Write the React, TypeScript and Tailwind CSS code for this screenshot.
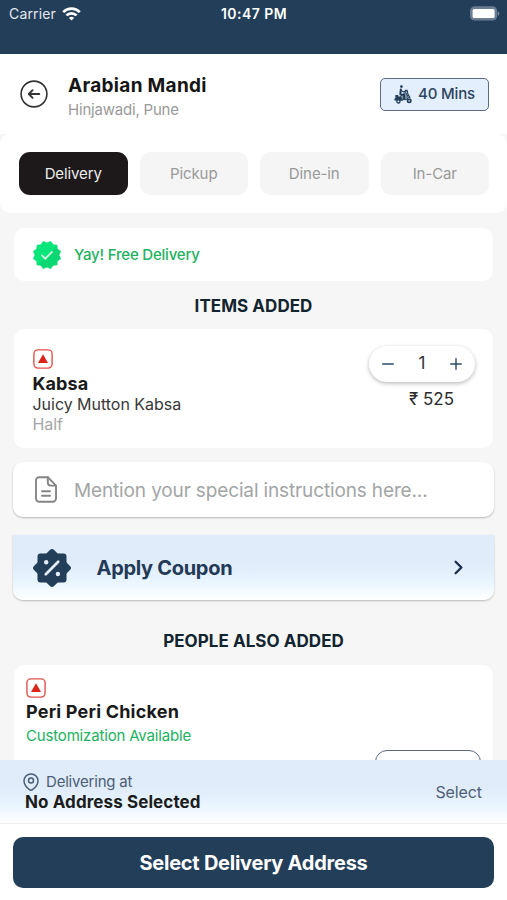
import React from 'react';
import { ChevronRight, Minus, Plus } from 'lucide-react';

const StatusBar: React.FC = () => (
  <div className="h-[54px] shrink-0 bg-[#233e59] px-[9px] text-white">
    <div className="relative flex h-[27px] items-center justify-between">
      <div className="flex items-center gap-[6px]">
        <span className="text-[14px] tracking-[0.15px] text-[#e3e8ee]">Carrier</span>
        <svg width="19" height="14" viewBox="0 0 19 14" fill="none" stroke="#fff" strokeWidth="2.7">
          <path d="M1.2 5.1a11.8 11.8 0 0 1 16.6 0" />
          <path d="M4.4 8.4a7.2 7.2 0 0 1 10.2 0" />
          <path d="M9.5 13.6 6.9 11a3.7 3.7 0 0 1 5.2 0z" fill="#fff" stroke="none" />
        </svg>
      </div>
      <span className="absolute inset-x-0 pl-px text-center text-[14px] font-semibold tracking-[0.45px]">10:47 PM</span>
      <svg width="31" height="15" viewBox="0 0 31 15" className="-mr-[2px]">
        <rect x="1.6" y="0.9" width="26" height="13" rx="4" fill="#6b7d91" stroke="#6b7d91" strokeWidth="1.2" />
        <rect x="3.6" y="2.9" width="22" height="9.2" rx="1.6" fill="#fff" />
        <path d="M28.8 5.2c2 .8 2 3.8 0 4.6z" fill="#7c8b9c" />
      </svg>
    </div>
  </div>
);

const ScooterIcon: React.FC = () => (
  <svg width="18" height="19" viewBox="0 0 18 19" fill="none" stroke="#233e59" strokeLinecap="round" strokeLinejoin="round">
    <circle cx="7.4" cy="1.6" r="1.4" fill="#233e59" stroke="none" />
    <path d="M6.8 4.6 6.3 9.4l3.7.4.2 4.2" strokeWidth="2" />
    <path d="M7 5.4l2.6 1.5 2.6-.8" strokeWidth="1.1" />
    <path d="M11.4 5.4h1.7l.8 3.6 2 3.6" strokeWidth="1.2" />
    <path d="M11.8 7.6l2.6 4.8-1.8 2.2H8.400l-2-2.600z" fill="#233e59" fillOpacity="0.55" strokeWidth="1" />
    <path d="M.4 15.400c0-3.400 2-4.300 5.800-3.800l3 4.100z" fill="#233e59" stroke="none" />
    <path d="M1.300 10h3v2h-3z" fill="#233e59" stroke="none" />
    <circle cx="4.4" cy="16.4" r="1.6" fill="#e3effc" strokeWidth="1.3" />
    <circle cx="15.2" cy="15.8" r="1.8" fill="#8fa0b3" strokeWidth="1.4" />
  </svg>
);

const BackIcon: React.FC = () => (
  <svg width="28" height="28" viewBox="0 0 28 28" fill="none" stroke="#343436" strokeLinecap="round" strokeLinejoin="round">
    <circle cx="14" cy="14" r="12.9" strokeWidth="1.6" />
    <path d="M19.3 14H9M12.6 10.2 8.8 14l3.8 3.8" strokeWidth="1.9" />
  </svg>
);

const Header: React.FC = () => (
  <header className="flex h-20 shrink-0 items-center bg-white pl-5 pr-[18px]">
    <BackIcon />
    <div className="ml-5 mt-[6px] flex-1">
      <h1 className="text-[19px] font-bold leading-6 tracking-[0.3px] text-[#161616]">Arabian Mandi</h1>
      <p className="text-[15px] leading-[23px] tracking-[-0.2px] text-[#9a9a9a]">Hinjawadi, Pune</p>
    </div>
    <div className="flex h-[33px] w-[109px] items-center justify-center gap-[6px] rounded-[5px] border-[1.5px] border-[#5b6b80] bg-[#e3effc]">
      <ScooterIcon />
      <span className="pt-px text-[15px] font-medium tracking-[-0.15px] text-[#2d4460]">40 Mins</span>
    </div>
  </header>
);

const tabs = ['Delivery', 'Pickup', 'Dine-in', 'In-Car'];

const OrderTabs: React.FC = () => (
  <div className="grid h-[79px] shrink-0 grid-cols-4 gap-3 rounded-[10px] bg-white pl-[19px] pr-[18px] pt-[18px]">
    {tabs.map((tab, i) => (
      <div
        key={tab}
        className={`flex h-[43px] items-center justify-center rounded-[11px] pt-px text-[15px] tracking-[-0.1px] ${
          i === 0 ? 'bg-[#1d191b] text-[#ececec]' : 'bg-[#f5f5f5] text-[#999]'
        }`}
      >
        {tab}
      </div>
    ))}
  </div>
);

const VerifiedSeal: React.FC = () => {
  const points = Array.from({ length: 24 }, (_, i) => {
    const r = i % 2 === 0 ? 13.6 : 11.5;
    const a = (i * Math.PI) / 12 + Math.PI / 12;
    return `${15 + r * Math.sin(a)},${15 - r * Math.cos(a)}`;
  }).join(' ');
  return (
    <svg width="30" height="30" viewBox="0 0 30 30">
      <defs>
        <linearGradient id="seal" x1="0" y1="0" x2="1" y2="1">
          <stop offset="0.5" stopColor="#08e57b" />
          <stop offset="0.51" stopColor="#0bd873" />
        </linearGradient>
      </defs>
      <polygon points={points} fill="url(#seal)" stroke="url(#seal)" strokeWidth="1.5" strokeLinejoin="round" />
      <path d="M10 15.4l3.3 3.3 6.7-6.9" fill="none" stroke="#d5fbe6" strokeWidth="1.7" strokeLinecap="round" />
    </svg>
  );
};

const NonVegIcon: React.FC = () => (
  <svg width="20" height="20" viewBox="0 0 20 20">
    <rect x="0.9" y="0.9" width="18.2" height="18.2" rx="4" fill="#fff" stroke="#e2524c" strokeWidth="1.4" />
    <path d="M10 5.2l5 8.8H5z" fill="#dc2318" />
  </svg>
);

const CouponIcon: React.FC = () => (
  <svg width="40" height="40" viewBox="0 0 40 40">
    <g fill="#233e59">
      <rect x="5.5" y="5.5" width="29" height="29" rx="3" />
      <rect x="5.8" y="5.8" width="28.4" height="28.4" rx="3" transform="rotate(45 20 20)" />
    </g>
    <path d="M13.8 26.200l12.400-12.400" stroke="#e3effc" strokeWidth="2.7" strokeLinecap="round" />
    <circle cx="14.2" cy="14.2" r="2.2" fill="#e3effc" />
    <circle cx="25.9" cy="26" r="2.2" fill="#e3effc" />
  </svg>
);

const NoteIcon: React.FC = () => (
  <svg width="24" height="28" viewBox="0 0 24 28" fill="none" stroke="#858585" strokeWidth="1.9" strokeLinecap="round" strokeLinejoin="round">
    <path d="M13.8 1.2H5.2A3.2 3.2 0 0 0 2 4.4v18.2a3.2 3.2 0 0 0 3.2 3.2h13.6a3.2 3.2 0 0 0 3.2-3.2V9.600z" />
    <path d="M13.8 1.2v5.4a3 3 0 0 0 3 3H22M8 15.3h8M8 19.8h8" />
  </svg>
);

const SectionTitle: React.FC<{ children: React.ReactNode }> = ({ children }) => (
  <h2 className="text-center text-[17px] font-bold leading-6 tracking-[0.05px] text-[#12242f]">{children}</h2>
);

const App: React.FC = () => {
  return (
    <div className="flex h-[900px] w-full flex-col overflow-hidden bg-[#f6f6f6] font-['Inter',sans-serif]">
      <StatusBar />
      <Header />
      <OrderTabs />

      <main className="min-h-0 flex-1 overflow-hidden px-[14px] pt-[15px]">
        <div className="flex h-[53px] items-center gap-3 rounded-[10px] bg-white pl-[18px]">
          <VerifiedSeal />
          <span className="pt-px text-[15px] font-medium tracking-[-0.2px] text-[#22b160]">Yay! Free Delivery</span>
        </div>

        <div className="mt-[13px]">
          <SectionTitle>ITEMS ADDED</SectionTitle>
        </div>

        <div className="mt-[11px] flex h-[119px] justify-between rounded-[10px] bg-white pl-[18.5px] pr-[18px]">
          <div className="pt-5">
            <NonVegIcon />
            <h3 className="mt-1 text-[18px] font-bold leading-[22px] tracking-[0.1px] text-[#1a1a1a]">Kabsa</h3>
            <p className="-mt-px text-[16px] leading-5 tracking-[-0.03px] text-[#383838]">Juicy Mutton Kabsa</p>
            <p className="text-[16px] leading-5 tracking-[-0.1px] text-[#a6a6a6]">Half</p>
          </div>
          <div className="flex flex-col items-end pt-[17px]">
            <div className="flex h-[36px] w-[106px] items-center justify-between rounded-full bg-white px-[10px] shadow-[0_1.5px_4px_rgba(0,0,0,0.28)]">
              <Minus size={18} strokeWidth={1.9} color="#2f4863" />
              <span className="text-[17px] text-[#333]">1</span>
              <Plus size={18} strokeWidth={1.9} color="#2f4863" />
            </div>
            <span className="mr-[21px] mt-[5px] text-[17px] leading-6 text-[#2b2b2b]">₹ 525</span>
          </div>
        </div>

        <div className="-mx-px mt-[14px] flex h-[55px] items-center rounded-[10px] bg-white pl-[20.5px] shadow-[0_1px_2px_rgba(0,0,0,0.25)]">
          <NoteIcon />
          <span className="ml-[16.5px] pt-[3px] text-[19px] tracking-[-0.14px] text-[#a3a6a6]">
            Mention your special instructions here...
          </span>
        </div>

        <div className="-mx-px mt-[18px] flex h-[65px] items-center rounded-b-[10px] bg-linear-to-b from-[#e0ecfa] from-45% via-[#e8f4fe] via-70% to-white pl-[19px] pr-[24px] shadow-[0_1px_2px_rgba(0,0,0,0.25)]">
          <CouponIcon />
          <span className="ml-[24.5px] flex-1 pt-px text-[20px] font-bold tracking-[-0.3px] text-[#233a57]">Apply Coupon</span>
          <ChevronRight size={23} strokeWidth={2.5} color="#1d2f4d" />
        </div>

        <div className="mt-[29px]">
          <SectionTitle>PEOPLE ALSO ADDED</SectionTitle>
        </div>

        <div className="mt-3 flex h-[160px] justify-between rounded-[10px] bg-white pl-3 pr-[12px]">
          <div className="pt-[13px]">
            <NonVegIcon />
            <h3 className="mt-[2px] text-[18px] font-bold leading-6 tracking-[0.2px] text-[#1a1a1a]">Peri Peri Chicken</h3>
            <p className="text-[15px] leading-[23px] tracking-[-0.17px] text-[#22b160]">Customization Available</p>
          </div>
          <div className="mt-[85px] h-[40px] w-[106px] rounded-[12px] border-[1.5px] border-[#59677b]" />
        </div>
      </main>

      <div className="flex h-[63px] shrink-0 items-center justify-between bg-linear-to-b from-[#e0ecfa] from-45% via-[#e8f4fe] via-70% to-white pl-[23px] pr-[25px]">
        <div>
          <div className="flex items-center gap-[7px] text-[#4b5d76]">
            <svg width="16" height="18" viewBox="0 0 16 18" fill="none" stroke="#4b5d76" strokeWidth="1.5">
              <path d="M8 1C4 1 1 4 1 7.7c0 3.5 2.5 6.6 5.2 8.7a2.9 2.9 0 0 0 3.6 0C12.5 14.3 15 11.2 15 7.7 15 4 12 1 8 1z" />
              <circle cx="8" cy="7.6" r="2.5" />
            </svg>
            <span className="text-[15px] leading-5 tracking-[-0.2px]">Delivering at</span>
          </div>
          <p className="ml-[2px] text-[17px] font-bold leading-5 tracking-[0.1px] text-[#1c1c1c]">No Address Selected</p>
        </div>
        <span className="text-[16px] tracking-[-0.1px] text-[#4f5f78]">Select</span>
      </div>

      <div className="h-[77px] shrink-0 border-t border-[#efefef] bg-white px-[13px] pt-[13px]">
        <div className="flex h-[51px] items-center justify-center rounded-[10px] bg-[#233e59] text-[20px] font-bold tracking-[-0.25px] text-white">
          Select Delivery Address
        </div>
      </div>
    </div>
  );
};

export default App;
